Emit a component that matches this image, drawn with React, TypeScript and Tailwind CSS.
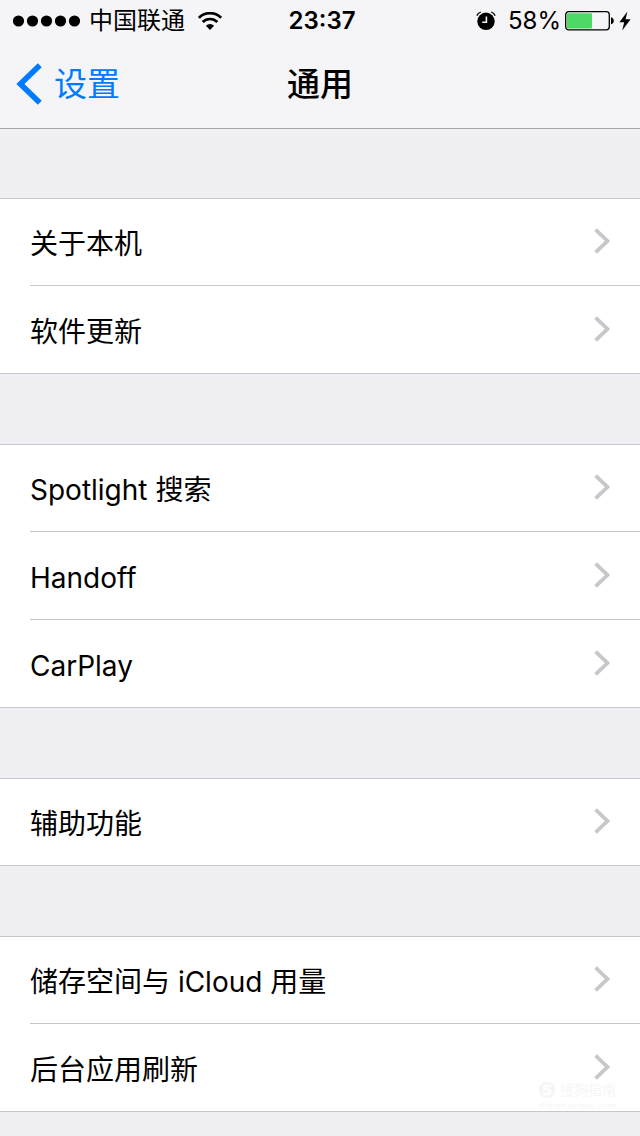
type SettingItem = {
  label: string;
  href: string;
};

const GROUPS: SettingItem[][] = [
  [
    { label: "关于本机", href: "#about" },
    { label: "软件更新", href: "#update" },
  ],
  [
    { label: "Spotlight 搜索", href: "#spotlight" },
    { label: "Handoff", href: "#handoff" },
    { label: "CarPlay", href: "#carplay" },
  ],
  [{ label: "辅助功能", href: "#accessibility" }],
  [
    { label: "储存空间与 iCloud 用量", href: "#storage" },
    { label: "后台应用刷新", href: "#background-refresh" },
  ],
];

function SignalDots() {
  return (
    <svg aria-hidden viewBox="0 0 68 12" fill="currentColor" className="h-3 w-[68px]">
      <circle cx="5.5" cy="6" r="5.6" />
      <circle cx="19.5" cy="6" r="5.6" />
      <circle cx="33.5" cy="6" r="5.6" />
      <circle cx="47.5" cy="6" r="5.6" />
      <circle cx="61.5" cy="6" r="5.6" />
    </svg>
  );
}

function WifiIcon() {
  return (
    <svg aria-hidden viewBox="0 0 24 18" fill="none" stroke="currentColor" className="h-[18px] w-6">
      <path d="M0.9 5.8a15.7 15.7 0 0 1 22.2 0" strokeWidth="2.7" />
      <path d="M4.7 10a10.4 10.4 0 0 1 14.6 0" strokeWidth="2.7" />
      <path d="M12 18l-4.1-4.2a5.8 5.8 0 0 1 8.2 0z" fill="currentColor" stroke="none" />
    </svg>
  );
}

function AlarmIcon() {
  return (
    <svg aria-hidden viewBox="0 0 20 20" fill="none" className="size-5">
      <circle cx="10" cy="10.3" r="8.7" fill="currentColor" />
      <path d="M0.8 4.6a7 7 0 0 1 4-3.6M19.2 4.6a7 7 0 0 0-4-3.6" stroke="currentColor" strokeWidth="1.3" />
      <path d="M10.4 5.4v5.8H6.2" stroke="#f5f5f7" strokeWidth="1.6" />
    </svg>
  );
}

function BatteryIcon() {
  return (
    <svg aria-hidden viewBox="0 0 50 20" className="h-5 w-[50px]">
      <rect x="0.7" y="0.7" width="43.6" height="18.1" rx="3" fill="none" stroke="currentColor" strokeWidth="1.3" />
      <rect x="2" y="2.2" width="25" height="15.2" rx="1" fill="#4cd964" />
      <path d="M46 6.3c3.8 1 3.8 6 0 7z" fill="currentColor" />
    </svg>
  );
}

function BoltIcon() {
  return (
    <svg aria-hidden viewBox="0 0 12 20" fill="currentColor" className="h-5 w-3">
      <path d="M8.4 0.4L0.4 11.2h4.8L3.2 19.4L11.6 8.2H6.6z" />
    </svg>
  );
}

function StatusBar() {
  return (
    <div className="grid h-[41px] grid-cols-[1fr_auto_1fr] items-center pr-[9px] pl-[13px] text-2xl">
      <div className="flex items-center">
        <SignalDots />
        <span className="ml-2">中国联通</span>
        <span className="ml-[13px]">
          <WifiIcon />
        </span>
      </div>
      <time className="font-semibold">23:37</time>
      <div className="flex items-center justify-end">
        <AlarmIcon />
        <span className="mr-1 ml-3">58%</span>
        <BatteryIcon />
        <span className="ml-1">
          <BoltIcon />
        </span>
      </div>
    </div>
  );
}

function NavBar() {
  return (
    <nav className="grid h-[87px] grid-cols-[1fr_auto_1fr] items-center px-4 pb-0.5">
      <a href="#settings" className="flex items-center gap-3 text-[33px] text-[#007aff]">
        <svg aria-hidden viewBox="0 0 26 42" fill="none" stroke="currentColor" strokeWidth="5.6" className="h-[42px] w-[26px]">
          <path d="M23.8 2.2L4.4 21l19.4 18.8" />
        </svg>
        <span className="pt-0.5">设置</span>
      </a>
      <h1 className="pt-0.5 text-[33px] font-medium">通用</h1>
    </nav>
  );
}

function SettingRow({ label, href }: SettingItem) {
  return (
    <li className="group pl-[30px]">
      <a
        href={href}
        className="-ml-[30px] flex h-[87px] items-center justify-between px-[30px] text-[28px]"
      >
        <span className="pt-1">{label}</span>
        <svg aria-hidden viewBox="0 0 16 28" fill="none" stroke="#c7c7cc" strokeWidth="3.8" className="h-7 w-4">
          <path d="M1.6 1.6L13.4 13L1.6 24.4" />
        </svg>
      </a>
      <div className="h-px bg-[#c8c7cc] group-last:-ml-[30px]" />
    </li>
  );
}

function Watermark() {
  return (
    <div
      aria-hidden
      className="pointer-events-none absolute right-6 bottom-0 flex flex-col items-end text-[#f6f6f6]"
    >
      <div className="flex items-center gap-1 text-sm leading-5">
        <svg viewBox="0 0 18 18" fill="none" className="size-[18px]">
          <circle cx="9" cy="9" r="8.5" fill="currentColor" />
          <path d="M13 5.5c-2-1.4-7-1.6-7 1s6.5 1.6 6.5 4.5-5 2.6-7.5 1" stroke="#ffffff" strokeWidth="2.2" />
        </svg>
        搜狗指南
      </div>
      <span className="text-[9px] leading-3">zhinan.sogou.com</span>
    </div>
  );
}

export default function App() {
  return (
    <div className="min-h-screen bg-[#efeff4] font-['Inter','Noto_Sans_CJK_SC',sans-serif] text-black">
      <header className="border-b border-[#a7a7aa] bg-[#f5f5f7]">
        <StatusBar />
        <NavBar />
      </header>
      <main className="flex flex-col gap-[70px] pt-[69px] pb-6">
        {GROUPS.map((items, i) => (
          <div key={items[0].href} className="relative bg-white">
            <ul className="shadow-[inset_0_1px_0_#c8c7cc]">
              {items.map((item) => (
                <SettingRow key={item.href} {...item} />
              ))}
            </ul>
            {i === GROUPS.length - 1 && <Watermark />}
          </div>
        ))}
      </main>
    </div>
  );
}
